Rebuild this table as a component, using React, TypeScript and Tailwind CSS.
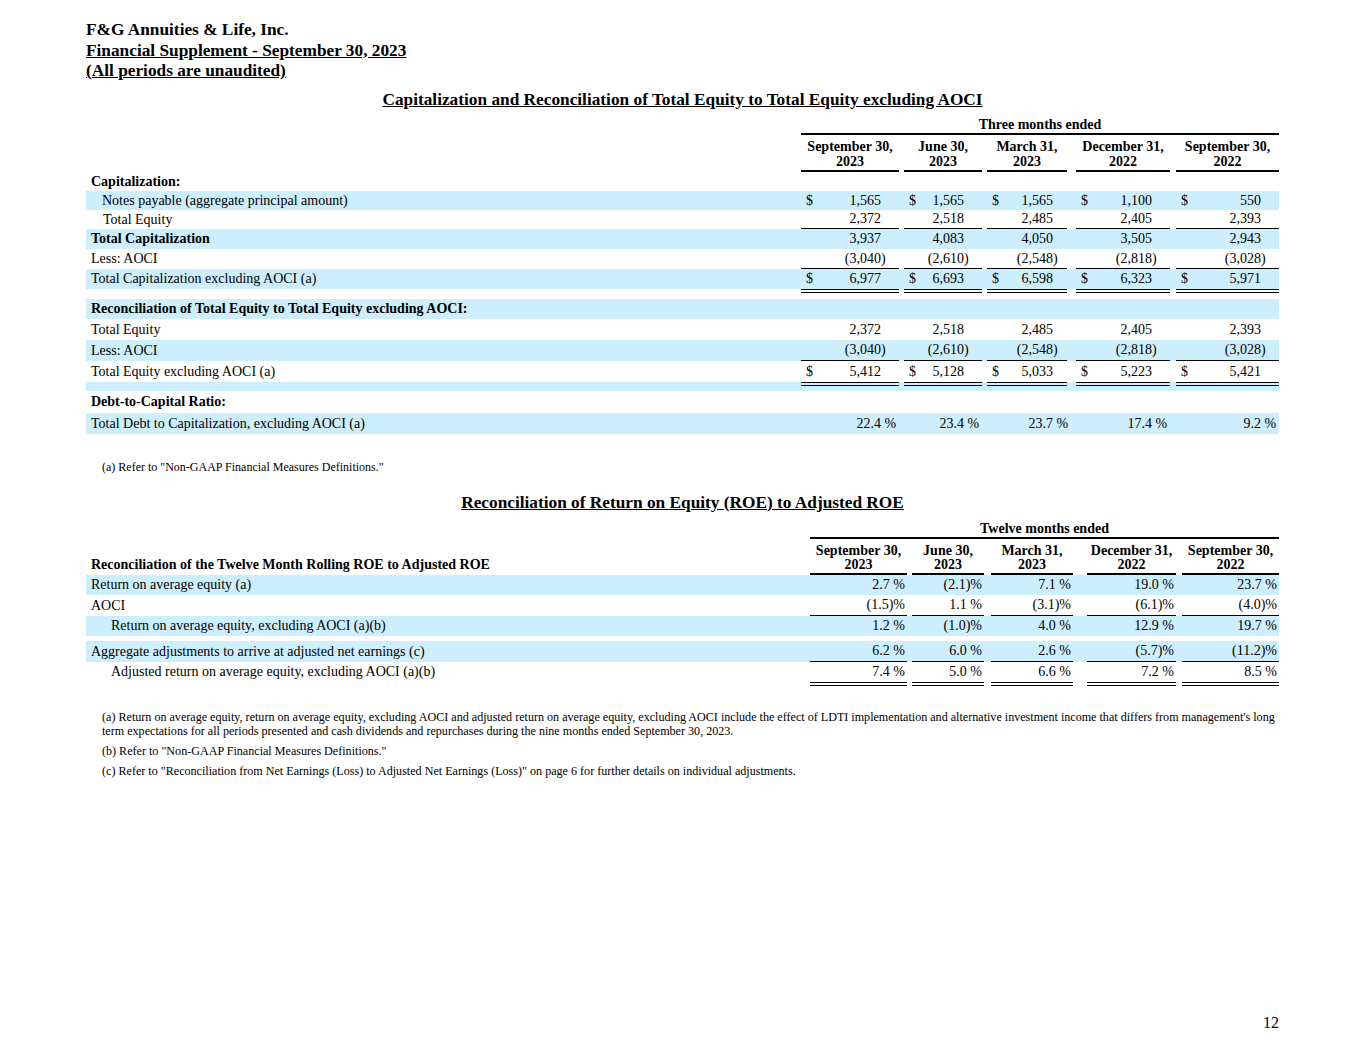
const BLUE = "bg-[#cdeefd]";

type Col = { box: string; sfx: string };

// column boxes for the capitalization table (label column is 715px)
const capCols: Col[] = [
  { box: "w-[98px]", sfx: "w-[18px]" },
  { box: "ml-[5px] w-[78px]", sfx: "w-[18px]" },
  { box: "ml-[5px] w-[80px]", sfx: "w-[14px]" },
  { box: "ml-[9px] w-[94px]", sfx: "w-[18px]" },
  { box: "ml-[6px] w-[103px]", sfx: "w-[18px]" },
];

// column boxes for the ROE table (label column is 724px)
const roeCols = ["w-[97px]", "ml-[5px] w-[72px]", "ml-[7px] w-[82px]", "ml-[14px] w-[89px]", "ml-[6px] w-[97px]"];

const periods = [
  ["September 30,", "2023"],
  ["June 30,", "2023"],
  ["March 31,", "2023"],
  ["December 31,", "2022"],
  ["September 30,", "2022"],
];

const equity = ["2,372", "2,518", "2,485", "2,405", "2,393"];
const aoci = ["(3,040)", "(2,610)", "(2,548)", "(2,818)", "(3,028)"];

function split(v: string): [string, string] {
  if (v.endsWith(")")) return [v.slice(0, -1), ")"];
  if (v.endsWith(" %")) return [v.slice(0, -2), " %"];
  return [v, ""];
}

function CapRow({
  label,
  pad = "pl-[5px]",
  bold,
  blue,
  h,
  vals,
  dollar,
  rule,
}: {
  label?: string;
  pad?: string;
  bold?: boolean;
  blue?: boolean;
  h: string;
  vals?: string[];
  dollar?: boolean;
  rule?: boolean;
}) {
  return (
    <div className={`flex ${h} ${blue ? BLUE : ""}`}>
      <div className={`flex w-[715px] items-center ${pad} ${bold ? "font-bold" : ""}`}>{label}</div>
      {vals &&
        capCols.map((c, i) => {
          const [main, sfx] = split(vals[i]);
          return (
            <div key={i} className={`flex items-center ${c.box} ${rule ? "border-b border-black" : ""}`}>
              {dollar && <span className="pl-[5px]">$</span>}
              <span className="ml-auto">{main}</span>
              <span className={`whitespace-pre ${c.sfx}`}>{sfx}</span>
            </div>
          );
        })}
    </div>
  );
}

function DoubleRule({ label, cols, h, blue }: { label: string; cols: string[]; h: string; blue?: boolean }) {
  return (
    <div className={`flex ${h} ${blue ? BLUE : ""}`}>
      <div className={label} />
      {cols.map((c, i) => (
        <div key={i} className={`${c} border-t-4 border-double border-black`} />
      ))}
    </div>
  );
}

function RoeRow({
  label,
  pad = "pl-[5px]",
  blue,
  h,
  vals,
  rule,
}: {
  label: string;
  pad?: string;
  blue?: boolean;
  h: string;
  vals: string[];
  rule?: boolean;
}) {
  return (
    <div className={`flex ${h} ${blue ? BLUE : ""}`}>
      <div className={`flex w-[724px] items-center ${pad}`}>{label}</div>
      {roeCols.map((c, i) => (
        <div
          key={i}
          className={`flex items-center justify-end whitespace-pre pr-[2px] ${c} ${rule ? "border-b border-black" : ""}`}
        >
          {vals[i]}
        </div>
      ))}
    </div>
  );
}

export default function App() {
  return (
    <div className="flex h-[1055px] w-full bg-white font-['Liberation_Serif','Times_New_Roman',serif] text-black">
      <div className="mx-auto flex w-[1193px] flex-col pt-[20px] text-[14px]">
        <div className="text-[17.3px] font-bold leading-[20.5px]">
          <p>F&amp;G Annuities &amp; Life, Inc.</p>
          <p className="underline">Financial Supplement - September 30, 2023</p>
          <p className="underline">(All periods are unaudited)</p>
        </div>

        <h2 className="mt-[8px] text-center text-[17.3px] font-bold leading-[20px] underline">
          Capitalization and Reconciliation of Total Equity to Total Equity excluding AOCI
        </h2>

        {/* capitalization table */}
        <div className="flex h-[25px] items-end">
          <div className="w-[715px]" />
          <div className="flex-1 border-b-2 border-black text-center font-bold leading-[16px]">Three months ended</div>
        </div>
        <div className="flex">
          <div className="w-[715px]" />
          {capCols.map((c, i) => (
            <div key={i} className={`${c.box} border-b-2 border-black pb-[1px] pt-[4px] text-center font-bold leading-[15px]`}>
              <div>{periods[i][0]}</div>
              <div>{periods[i][1]}</div>
            </div>
          ))}
        </div>
        <CapRow label="Capitalization:" bold h="h-[19px]" />
        <CapRow
          label="Notes payable (aggregate principal amount)"
          pad="pl-[16px]"
          blue
          h="h-[19px]"
          dollar
          vals={["1,565", "1,565", "1,565", "1,100", "550"]}
        />
        <CapRow label="Total Equity" pad="pl-[17px]" h="h-[19px]" vals={equity} rule />
        <CapRow label="Total Capitalization" bold blue h="h-[20px]" vals={["3,937", "4,083", "4,050", "3,505", "2,943"]} />
        <CapRow label="Less: AOCI" h="h-[20px]" vals={aoci} rule />
        <CapRow
          label="Total Capitalization excluding AOCI (a)"
          blue
          h="h-[20px]"
          dollar
          vals={["6,977", "6,693", "6,598", "6,323", "5,971"]}
        />
        <DoubleRule label="w-[715px]" cols={capCols.map((c) => c.box)} h="h-[10px]" />
        <CapRow label="Reconciliation of Total Equity to Total Equity excluding AOCI:" bold blue h="h-[20px]" />
        <CapRow label="Total Equity" h="h-[21px]" vals={equity} />
        <CapRow label="Less: AOCI" blue h="h-[21px]" vals={aoci} rule />
        <CapRow
          label="Total Equity excluding AOCI (a)"
          h="h-[21px]"
          dollar
          vals={["5,412", "5,128", "5,033", "5,223", "5,421"]}
        />
        <DoubleRule label="w-[715px]" cols={capCols.map((c) => c.box)} h="h-[9px]" blue />
        <CapRow label="Debt-to-Capital Ratio:" bold h="h-[22px]" />
        <CapRow
          label="Total Debt to Capitalization, excluding AOCI (a)"
          blue
          h="h-[21px]"
          vals={["22.4 %", "23.4 %", "23.7 %", "17.4 %", "9.2 %"]}
        />

        <p className="mt-[26px] pl-[16px] text-[12px] leading-[14px]">(a) Refer to "Non-GAAP Financial Measures Definitions."</p>

        <h2 className="mt-[19px] text-center text-[17.3px] font-bold leading-[20px] underline">
          Reconciliation of Return on Equity (ROE) to Adjusted ROE
        </h2>

        {/* ROE table */}
        <div className="flex h-[26px] items-end">
          <div className="w-[724px]" />
          <div className="flex-1 border-b-2 border-black text-center font-bold leading-[16px]">Twelve months ended</div>
        </div>
        <div className="flex font-bold">
          <div className="flex w-[724px] items-end pb-[3px] pl-[5px] leading-[14px]">
            Reconciliation of the Twelve Month Rolling ROE to Adjusted ROE
          </div>
          {roeCols.map((c, i) => (
            <div key={i} className={`${c} border-b-2 border-black pb-[1px] pt-[5px] text-center leading-[14px]`}>
              <div>{periods[i][0]}</div>
              <div>{periods[i][1]}</div>
            </div>
          ))}
        </div>
        <RoeRow label="Return on average equity (a)" blue h="h-[20px]" vals={["2.7 %", "(2.1)%", "7.1 %", "19.0 %", "23.7 %"]} />
        <RoeRow label="AOCI" h="h-[21px]" vals={["(1.5)%", "1.1 %", "(3.1)%", "(6.1)%", "(4.0)%"]} rule />
        <RoeRow
          label="Return on average equity, excluding AOCI (a)(b)"
          pad="pl-[25px]"
          blue
          h="h-[20px]"
          vals={["1.2 %", "(1.0)%", "4.0 %", "12.9 %", "19.7 %"]}
        />
        <div className="h-[5px]" />
        <RoeRow
          label="Aggregate adjustments to arrive at adjusted net earnings (c)"
          blue
          h="h-[21px]"
          vals={["6.2 %", "6.0 %", "2.6 %", "(5.7)%", "(11.2)%"]}
          rule
        />
        <RoeRow
          label="Adjusted return on average equity, excluding AOCI (a)(b)"
          pad="pl-[25px]"
          h="h-[20px]"
          vals={["7.4 %", "5.0 %", "6.6 %", "7.2 %", "8.5 %"]}
        />
        <DoubleRule label="w-[724px]" cols={roeCols} h="h-[4px]" />

        <div className="mt-[24px] flex flex-col gap-[6px] pl-[16px] text-[12.1px] leading-[14px]">
          <p className="whitespace-nowrap">
            (a) Return on average equity, return on average equity, excluding AOCI and adjusted return on average equity, excluding
            AOCI include the effect of LDTI implementation and alternative investment income that differs from management's long
            <br />
            term expectations for all periods presented and cash dividends and repurchases during the nine months ended September
            30, 2023.
          </p>
          <p>(b) Refer to "Non-GAAP Financial Measures Definitions."</p>
          <p>(c) Refer to "Reconciliation from Net Earnings (Loss) to Adjusted Net Earnings (Loss)" on page 6 for further details on individual adjustments.</p>
        </div>

        <p className="mb-[23px] mt-auto text-right text-[16px] leading-[18px]">12</p>
      </div>
    </div>
  );
}
